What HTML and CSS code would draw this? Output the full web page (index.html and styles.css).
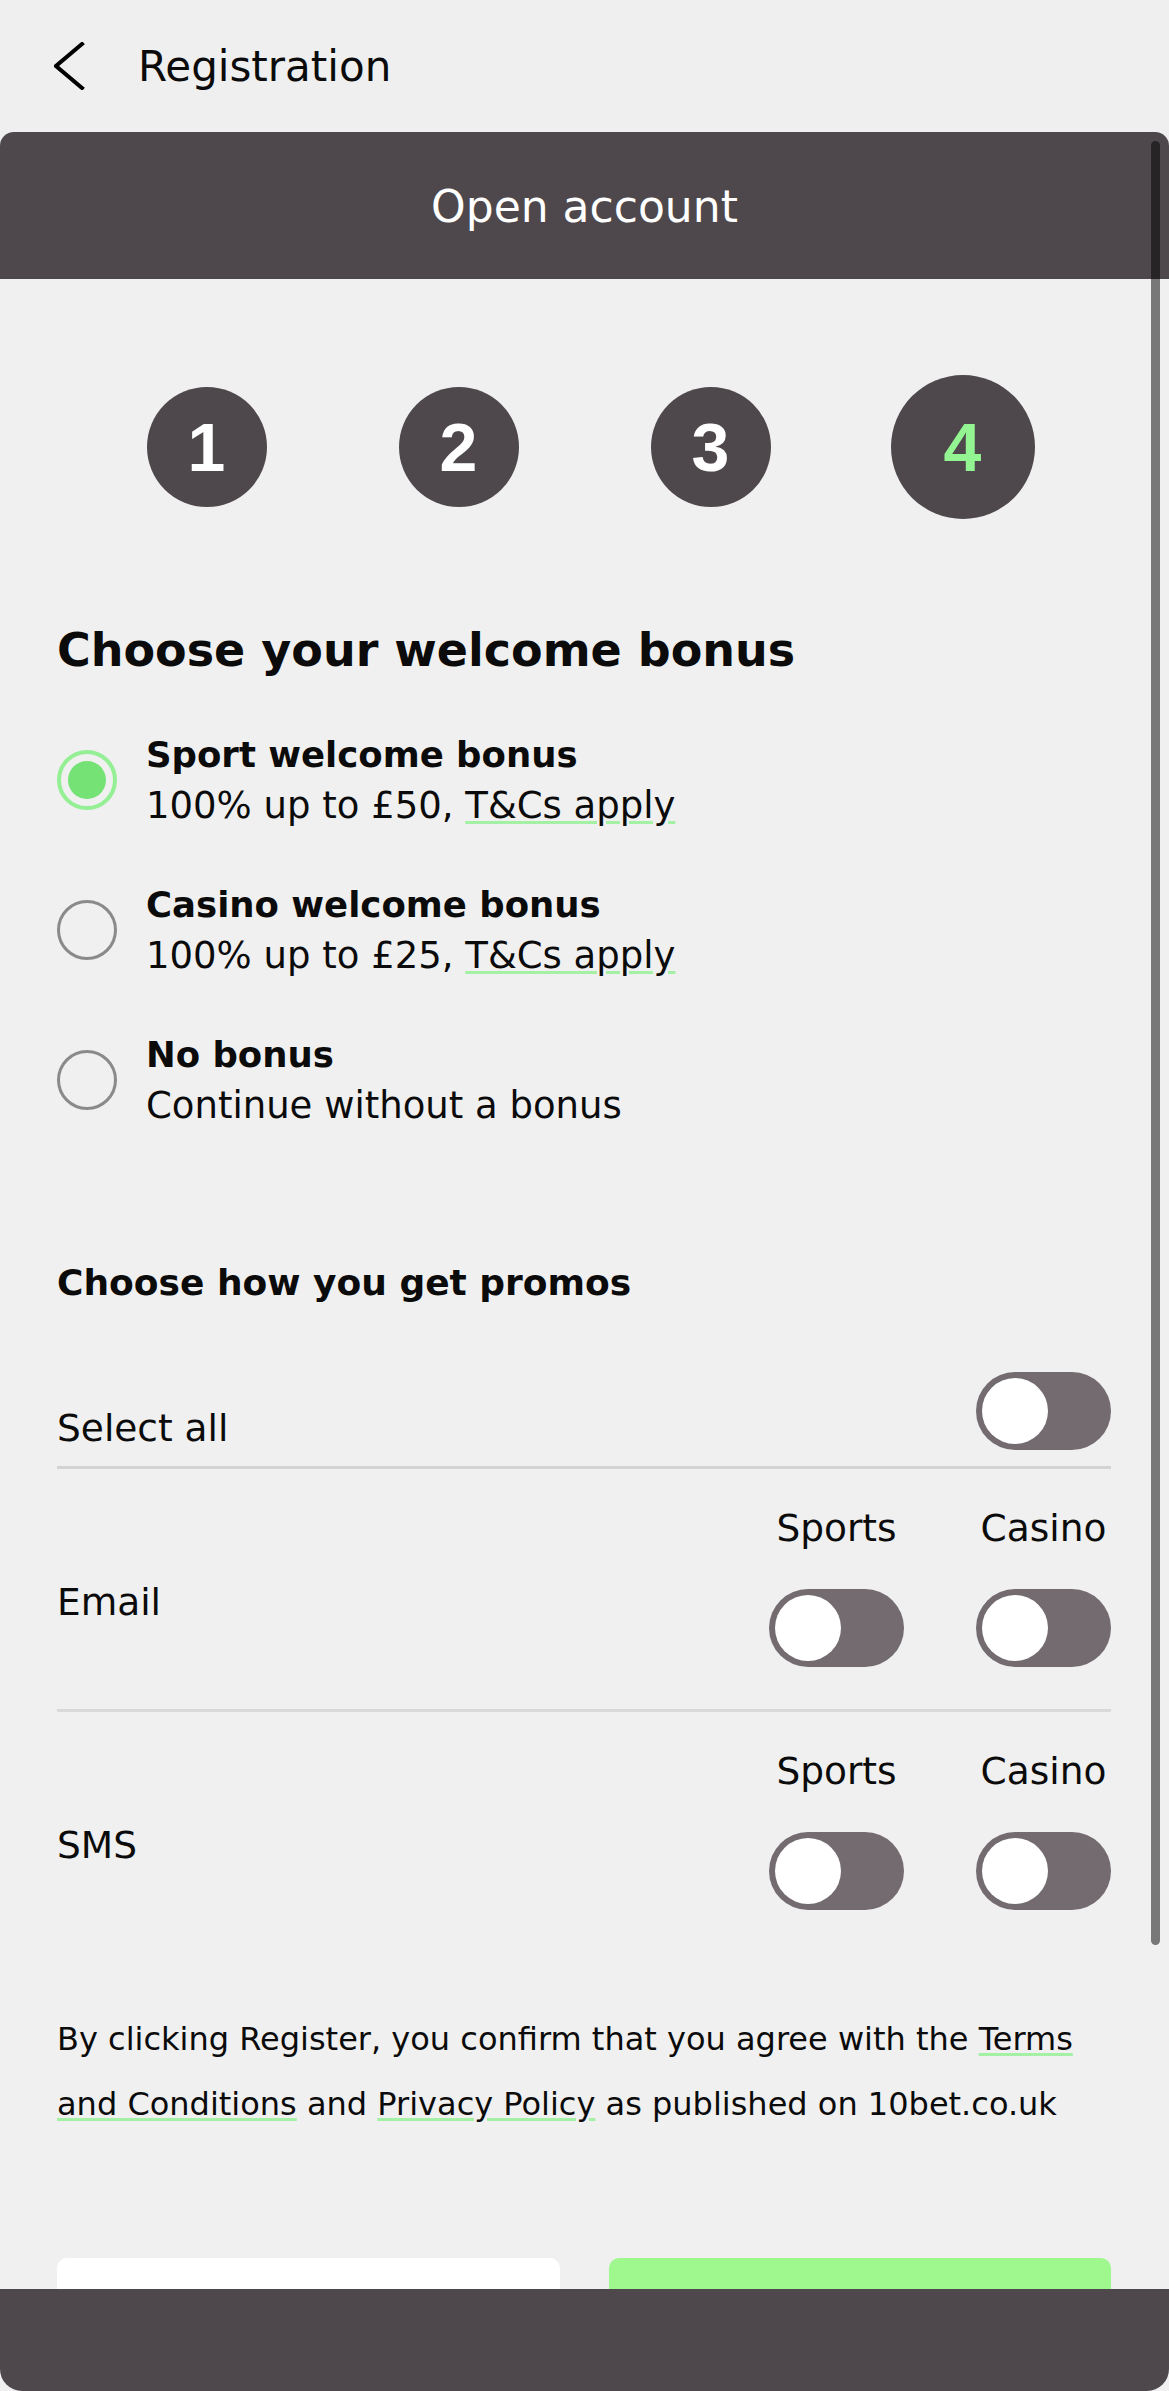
FILE: index.html
```html
<!DOCTYPE html>
<html lang="en">
<head>
<meta charset="utf-8">
<title>Registration</title>
<link rel="stylesheet" href="styles.css">
</head>
<body>
<header class="topbar">
  <svg class="back" width="32" height="48" viewBox="0 0 32 48" aria-hidden="true">
    <polyline points="28,2 2,24 28,46" fill="none" stroke="#000" stroke-width="4" stroke-linecap="square" stroke-linejoin="miter"/>
  </svg>
  <h1 class="page-title">Registration</h1>
</header>

<main class="sheet">
  <div class="sheet-head">Open account</div>
  <div class="scrollbar"></div>

  <div class="steps">
    <div class="step-slot"><span class="step">1</span></div>
    <div class="step-slot"><span class="step">2</span></div>
    <div class="step-slot"><span class="step">3</span></div>
    <div class="step-slot"><span class="step step-active">4</span></div>
  </div>

  <section class="bonus">
    <h2 class="bonus-title">Choose your welcome bonus</h2>
    <div class="option">
      <span class="radio radio-on"><span class="radio-dot"></span></span>
      <div class="option-text">
        <div class="option-name">Sport welcome bonus</div>
        <div class="option-desc">100% up to £50, <a class="link">T&amp;Cs apply</a></div>
      </div>
    </div>
    <div class="option">
      <span class="radio"></span>
      <div class="option-text">
        <div class="option-name">Casino welcome bonus</div>
        <div class="option-desc">100% up to £25, <a class="link">T&amp;Cs apply</a></div>
      </div>
    </div>
    <div class="option">
      <span class="radio"></span>
      <div class="option-text">
        <div class="option-name">No bonus</div>
        <div class="option-desc">Continue without a bonus</div>
      </div>
    </div>
  </section>

  <section class="promos">
    <h3 class="promos-title">Choose how you get promos</h3>
    <div class="select-all">
      <span class="row-label">Select all</span>
      <span class="toggle"><span class="knob"></span></span>
    </div>
    <div class="channel">
      <span class="row-label channel-label">Email</span>
      <div class="channel-cols">
        <div class="col"><span class="col-label">Sports</span><span class="toggle"><span class="knob"></span></span></div>
        <div class="col"><span class="col-label">Casino</span><span class="toggle"><span class="knob"></span></span></div>
      </div>
    </div>
    <div class="channel channel-last">
      <span class="row-label channel-label">SMS</span>
      <div class="channel-cols">
        <div class="col"><span class="col-label">Sports</span><span class="toggle"><span class="knob"></span></span></div>
        <div class="col"><span class="col-label">Casino</span><span class="toggle"><span class="knob"></span></span></div>
      </div>
    </div>
  </section>

  <p class="legal">By clicking Register, you confirm that you agree with the <a class="link">Terms and Conditions</a> and <a class="link">Privacy Policy</a> as published on 10bet.co.uk</p>

  <div class="actions">
    <button class="btn btn-back" type="button"></button>
    <button class="btn btn-register" type="button"></button>
  </div>
</main>

<footer class="bottom-bar"></footer>
</body>
</html>
```
FILE: styles.css
```css
* { box-sizing: border-box; }

html, body {
  margin: 0;
  padding: 0;
}

body {
  background: #efefef;
  color: #0b0b0b;
  font-family: "DejaVu Sans", "Liberation Sans", sans-serif;
  width: 1169px;
  overflow: hidden;
}

.topbar {
  height: 132px;
  display: flex;
  align-items: center;
  padding-left: 54px;
}

.back {
  display: block;
  flex: none;
}

.page-title {
  margin: 0 0 0 52px;
  font-size: 42px;
  font-weight: 400;
  line-height: 1;
  padding-top: 2px;
}

.sheet {
  position: relative;
  background: #f0f0f0;
  border-radius: 14px 14px 0 0;
  overflow: hidden;
}

.sheet-head {
  height: 147px;
  background: #4e484c;
  color: #fff;
  display: flex;
  align-items: center;
  justify-content: center;
  font-size: 44px;
  font-weight: 400;
  line-height: 1;
  padding-top: 2px;
}

.scrollbar {
  position: absolute;
  top: 9px;
  right: 9px;
  width: 9px;
  height: 1804px;
  border-radius: 5px;
  background: rgba(0, 0, 0, 0.5);
}

.steps {
  display: flex;
  justify-content: center;
  gap: 108px;
  padding-top: 96px;
}

.step-slot {
  width: 144px;
  height: 144px;
  display: flex;
  align-items: center;
  justify-content: center;
}

.step {
  width: 120px;
  height: 120px;
  border-radius: 50%;
  background: #4e474b;
  color: #fff;
  display: flex;
  align-items: center;
  justify-content: center;
  font-family: "Liberation Sans", Arial, sans-serif;
  font-weight: 700;
  font-size: 68px;
  line-height: 1;
}

.step-active {
  width: 144px;
  height: 144px;
  color: #92f592;
}

.bonus {
  padding: 0 57px;
}

.bonus-title {
  margin: 0;
  padding-top: 103px;
  font-size: 46px;
  font-weight: 700;
  line-height: 56px;
}

.option {
  display: flex;
  align-items: center;
  gap: 29px;
  height: 150px;
}

.bonus-title + .option {
  margin-top: 27px;
}

.radio {
  flex: none;
  width: 60px;
  height: 60px;
  border-radius: 50%;
  border: 3px solid #8a8a8a;
  display: flex;
  align-items: center;
  justify-content: center;
}

.radio-on {
  border: 4px solid #95ef95;
}

.radio-dot {
  width: 38px;
  height: 38px;
  border-radius: 50%;
  background: #74e274;
}

.option-text {
  display: flex;
  flex-direction: column;
}

.option-name {
  font-size: 35.5px;
  font-weight: 700;
  line-height: 51px;
}

.option-desc {
  font-size: 37px;
  font-weight: 400;
  line-height: 51px;
}

.link {
  color: inherit;
  text-decoration: underline;
  text-decoration-color: #a4f0a4;
  text-decoration-thickness: 3px;
  text-underline-offset: 3px;
}

.promos {
  padding: 0 58px 0 57px;
}

.promos-title {
  margin: 0;
  padding-top: 106px;
  font-size: 36px;
  font-weight: 700;
  line-height: 44px;
}

.row-label,
.col-label {
  font-size: 37.5px;
  line-height: 44px;
}

.select-all {
  display: flex;
  justify-content: space-between;
  align-items: flex-end;
  margin-top: 67px;
  padding-bottom: 16px;
  border-bottom: 3px solid #d3d3d3;
}

.toggle {
  flex: none;
  width: 135px;
  height: 78px;
  border-radius: 39px;
  background: #736b6f;
  padding: 6px;
  display: flex;
  align-items: center;
}

.knob {
  width: 66px;
  height: 66px;
  border-radius: 50%;
  background: #fff;
}

.channel {
  display: flex;
  justify-content: space-between;
  align-items: center;
  padding: 37px 0 42px;
  border-bottom: 3px solid #d9d9d9;
}

.channel-last {
  border-bottom: none;
}

.channel-label {
  padding-top: 30px;
}

.channel-cols {
  display: flex;
  gap: 72px;
}

.col {
  display: flex;
  flex-direction: column;
  align-items: center;
  gap: 39px;
}

.legal {
  margin: 0;
  padding: 55px 57px 0;
  font-size: 32px;
  line-height: 65px;
}

.actions {
  display: grid;
  grid-template-columns: 1fr 1fr;
  gap: 49px;
  padding: 121px 58px 60px 57px;
}

.btn {
  height: 100px;
  border: none;
  border-radius: 10px;
}

.btn-back {
  background: #fff;
}

.btn-register {
  background: #9ef88e;
}

.bottom-bar {
  position: fixed;
  left: 0;
  right: 0;
  bottom: 0;
  height: 102px;
  background: #4e474c;
  border-radius: 0 0 22px 22px;
}
```
